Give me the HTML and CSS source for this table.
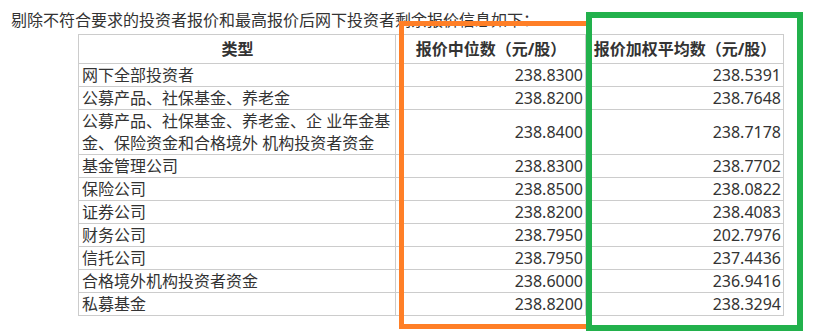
FILE: index.html
```html
<!DOCTYPE html>
<html lang="zh-CN">
<head>
<meta charset="utf-8">
<title>网下投资者报价信息</title>
<link rel="stylesheet" href="styles.css">
</head>
<body>
<div class="page">
  <p class="intro">剔除不符合要求的投资者报价和最高报价后网下投资者剩余报价信息如下：</p>
  <table class="quote-table">
    <colgroup>
      <col class="col-type">
      <col class="col-median">
      <col class="col-avg">
    </colgroup>
    <thead>
      <tr>
        <th>类型</th>
        <th>报价中位数（元/股）</th>
        <th>报价加权平均数（元/股）</th>
      </tr>
    </thead>
    <tbody>
      <tr><td>网下全部投资者</td><td class="num">238.8300</td><td class="num">238.5391</td></tr>
      <tr><td>公募产品、社保基金、养老金</td><td class="num">238.8200</td><td class="num">238.7648</td></tr>
      <tr><td>公募产品、社保基金、养老金、企 业年金基<br>金、保险资金和合格境外 机构投资者资金</td><td class="num">238.8400</td><td class="num">238.7178</td></tr>
      <tr><td>基金管理公司</td><td class="num">238.8300</td><td class="num">238.7702</td></tr>
      <tr><td>保险公司</td><td class="num">238.8500</td><td class="num">238.0822</td></tr>
      <tr><td>证券公司</td><td class="num">238.8200</td><td class="num">238.4083</td></tr>
      <tr><td>财务公司</td><td class="num">238.7950</td><td class="num">202.7976</td></tr>
      <tr><td>信托公司</td><td class="num">238.7950</td><td class="num">237.4436</td></tr>
      <tr><td>合格境外机构投资者资金</td><td class="num">238.6000</td><td class="num">236.9416</td></tr>
      <tr><td>私募基金</td><td class="num">238.8200</td><td class="num">238.3294</td></tr>
    </tbody>
  </table>
  <div class="mark mark-orange"></div>
  <div class="mark mark-green"></div>
</div>
</body>
</html>
```

FILE: styles.css
```css
html, body {
  margin: 0;
  padding: 0;
  background: #ffffff;
}

body {
  font-family: "Noto Sans", "Noto Sans CJK SC", sans-serif;
  font-size: 16px;
  color: #333333;
}

.page {
  position: relative;
  width: 821px;
  height: 331px;
  overflow: hidden;
  padding: 9px 0 0 11px;
  box-sizing: border-box;
}

.intro {
  margin: 0;
  line-height: 22px;
  white-space: nowrap;
}

.quote-table {
  margin: 3px 0 0 67px;
  border-collapse: collapse;
  table-layout: fixed;
  width: 705px;
}

.col-type { width: 317px; }
.col-median { width: 190px; }
.col-avg { width: 198px; }

.quote-table th,
.quote-table td {
  border: 1px solid #cccccc;
  line-height: 22px;
  padding: 0 2px 0 3px;
  white-space: nowrap;
}

.quote-table th {
  font-weight: bold;
  text-align: center;
  padding-top: 3px;
  padding-bottom: 3px;
  color: #333333;
}

.quote-table td.num {
  text-align: right;
}

.mark {
  position: absolute;
  box-sizing: border-box;
}

.mark-orange {
  left: 399px;
  top: 21px;
  width: 192px;
  height: 308px;
  border: 5px solid #ff7f27;
}

.mark-green {
  left: 586px;
  top: 12px;
  width: 217px;
  height: 319px;
  border: 6px solid #22b14c;
}
```
